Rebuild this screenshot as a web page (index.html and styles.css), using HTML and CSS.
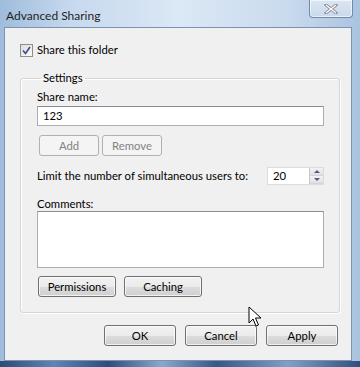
FILE: index.html
```html
<!DOCTYPE html>
<html lang="en">
<head>
    <meta charset="UTF-8">
    <meta name="viewport" content="width=device-width, initial-scale=1.0">
    <title>Advanced Sharing</title>
    <link rel="stylesheet" href="styles.css">
</head>
<body>

<div class="window">
    <div class="titlebar">
        <span class="title">Advanced Sharing</span>
        <button class="close-btn">
            <svg width="14" height="10" viewBox="0 0 14 10">
                <path d="M2 1 L12 9 M12 1 L2 9" stroke="#8a8f96" stroke-width="3" stroke-linecap="square"/>
                <path d="M2 1 L12 9 M12 1 L2 9" stroke="#fff" stroke-width="1.2"/>
            </svg>
        </button>
    </div>

    <div class="client">
        <label class="check-row">
            <span class="checkbox">
                <svg width="9" height="9" viewBox="0 0 9 9">
                    <path d="M1 4.5 L3.5 7.5 L8 1" fill="none" stroke="#3b4a8c" stroke-width="1.6"/>
                </svg>
            </span>
            Share this folder
        </label>

        <fieldset class="group">
            <legend>Settings</legend>

            <div class="field-label">Share name:</div>
            <div class="textbox">123</div>

            <div class="btn-row small">
                <button class="btn disabled">Add</button>
                <button class="btn disabled">Remove</button>
            </div>

            <div class="limit-row">
                <span>Limit the number of simultaneous users to:</span>
                <div class="spinner">
                    <span class="spin-value">20</span>
                    <div class="spin-arrows">
                        <span class="arrow up"></span>
                        <span class="arrow down"></span>
                    </div>
                </div>
            </div>

            <div class="field-label comments">Comments:</div>
            <div class="textarea"></div>

            <div class="btn-row perms">
                <button class="btn wide">Permissions</button>
                <button class="btn wide">Caching</button>
            </div>
        </fieldset>

        <div class="dialog-buttons">
            <button class="btn dlg">OK</button>
            <button class="btn dlg">Cancel</button>
            <button class="btn dlg">Apply</button>
        </div>

        <svg class="cursor" width="14" height="22" viewBox="0 0 14 22">
            <path d="M1 1 L1 17 L5 13 L8 20 L10.5 19 L7.5 12 L13 12 Z" fill="#fff" stroke="#000" stroke-width="1"/>
        </svg>
    </div>
    <div class="frame-bottom"></div>
</div>

</body>
</html>
```

FILE: styles.css
```css
body {
    margin: 0;
    padding: 0;
    font-family: Lato, 'Liberation Sans', sans-serif;
    font-size: 11.3px;
    line-height: 16px;
    color: #000;
}

.window {
    width: 360px;
    height: 367px;
    display: flex;
    flex-direction: column;
    background: linear-gradient(90deg, #9fbcdc 0%, #c7d9ee 20%, #dbe8f5 50%, #c9daed 80%, #a9c3e0 100%);
    overflow: hidden;
}

.titlebar {
    height: 27px;
    display: flex;
    justify-content: space-between;
    align-items: flex-start;
    padding-left: 6px;
    padding-right: 7px;
}

.title {
    margin-top: 8px;
    font-size: 12px;
    color: #1e1e1e;
}

.close-btn {
    width: 44px;
    height: 18px;
    border: 1px solid #6f8aab;
    border-top: none;
    border-radius: 0 0 4px 4px;
    background: linear-gradient(#dbe6f3, #c9d9ec);
    display: flex;
    justify-content: center;
    align-items: center;
    padding: 0;
    box-shadow: inset 0 0 0 1px rgba(255, 255, 255, 0.6);
}

.client {
    position: relative;
    flex: 1;
    margin: 0 8px 0 4px;
    background: #f0f0f0;
    border: 1px solid #7c93b0;
    padding: 14px 11px 0 15px;
    display: flex;
    flex-direction: column;
}

.frame-bottom {
    height: 6px;
    background: linear-gradient(90deg, #2b4a78 0%, #5d86b8 15%, #2c4d7f 30%, #88a9cf 45%, #34578a 60%, #7ea0c9 80%, #2f507f 100%);
}

.check-row {
    display: flex;
    align-items: center;
    gap: 4px;
    height: 16px;
}

.checkbox {
    width: 11px;
    height: 11px;
    border: 1px solid #8e8f8f;
    background: linear-gradient(135deg, #dcdcdc, #fbfbfb);
    display: flex;
    justify-content: center;
    align-items: center;
}

.group {
    margin: 12px 0 0 0;
    padding: 3px 15px 15px 16px;
    border: 1px solid #d5d5d5;
    border-radius: 3px;
    box-shadow: inset 1px 1px 0 #fff, 1px 1px 0 #fff;
}

.group legend {
    padding: 0 2px;
    margin-left: 4px;
}

.field-label {
    height: 16px;
    margin-bottom: 1px;
}

.textbox {
    height: 18px;
    background: #fff;
    border: 1px solid #abadb3;
    border-top-color: #8a8d94;
    padding: 0 5px;
    line-height: 18px;
}

.btn-row {
    display: flex;
    gap: 3px;
}

.btn-row.small {
    margin-top: 9px;
    margin-left: 2px;
}

.btn {
    font-family: inherit;
    font-size: 11.3px;
    height: 21px;
    padding: 0;
    border: 1px solid #707070;
    border-radius: 3px;
    background: linear-gradient(#f2f2f2 0%, #ebebeb 50%, #dddddd 51%, #cfcfcf 100%);
    color: #000;
    box-shadow: inset 0 0 0 1px rgba(255, 255, 255, 0.7);
}

.btn.disabled {
    width: 60px;
    border-color: #adb2b5;
    background: #f4f4f4;
    color: #838383;
    box-shadow: none;
}

.limit-row {
    margin-top: 11px;
    display: flex;
    justify-content: space-between;
    align-items: center;
    white-space: nowrap;
}

.spinner {
    width: 55px;
    height: 16px;
    background: #fff;
    border: 1px solid #dcdcdc;
    display: flex;
}

.spin-value {
    flex: 1;
    padding-left: 5px;
    line-height: 16px;
}

.spin-arrows {
    width: 13px;
    display: flex;
    flex-direction: column;
    border-left: 1px solid #c9c9c9;
}

.arrow {
    flex: 1;
    display: flex;
    justify-content: center;
    align-items: center;
    background: linear-gradient(#f3f3f3, #e0e0e0);
    border-bottom: 1px solid #d4d4d4;
}

.arrow::after {
    content: "";
    border-left: 3px solid transparent;
    border-right: 3px solid transparent;
}

.arrow.up::after {
    border-bottom: 3px solid #4d6185;
}

.arrow.down::after {
    border-top: 3px solid #4d6185;
}

.field-label.comments {
    margin-top: 12px;
    height: 14px;
    line-height: 14px;
    margin-bottom: 0;
}

.textarea {
    height: 55px;
    background: #fff;
    border: 1px solid #abadb3;
    border-top-color: #8a8d94;
}

.btn-row.perms {
    margin-top: 8px;
    gap: 8px;
    margin-left: 1px;
}

.btn.wide {
    width: 78px;
}

.dialog-buttons {
    margin-top: 12px;
    display: flex;
    justify-content: flex-end;
    gap: 9px;
    padding-right: 2px;
}

.btn.dlg {
    width: 72px;
}

.cursor {
    position: absolute;
    left: 243px;
    top: 278px;
}
```
